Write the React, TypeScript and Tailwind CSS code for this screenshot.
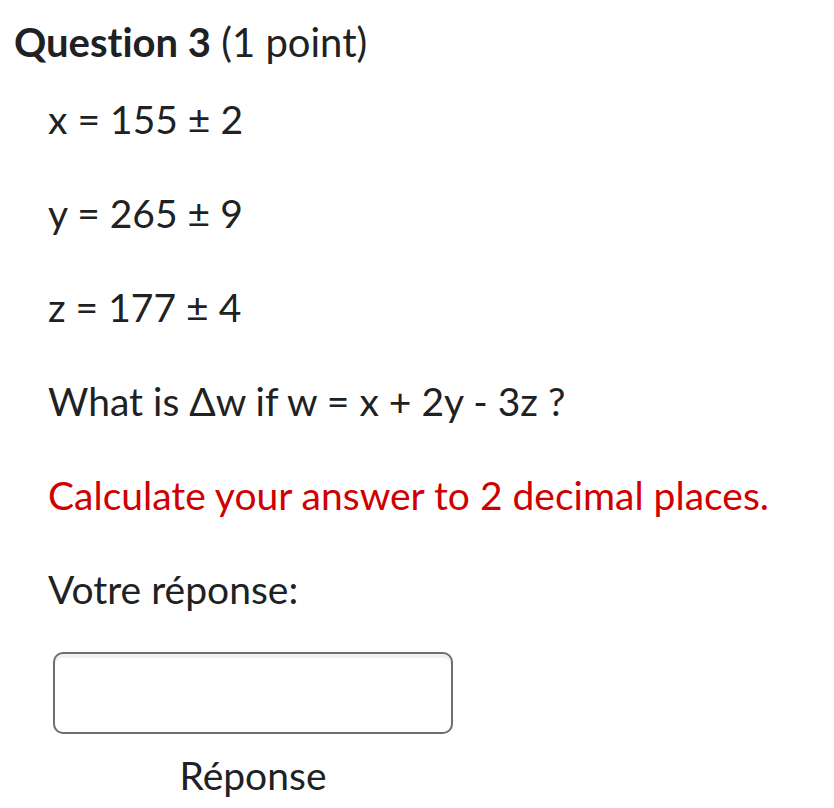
export default function App() {
  return (
    <div
      className="w-[834px] h-[808px] bg-white text-[#202122] overflow-hidden [font-variant-ligatures:none]"
      style={{ fontFamily: "Lato, 'Liberation Sans', sans-serif" }}
    >
      <h2 className="pl-[14px] pt-[12px] text-[40px] leading-[60px] font-normal">
        <span className="font-bold">Question 3</span> (1 point)
      </h2>

      <div className="pl-[48px] pt-[17px] text-[39px] leading-[60px] flex flex-col gap-[34px]">
        <p>x = 155 ± 2</p>
        <p>y = 265 ± 9</p>
        <p>z = 177 ± 4</p>
        <p>What is Δw if w = x + 2y - 3z ?</p>
        <p className="text-[#d00000]">Calculate your answer to 2 decimal places.</p>
        <p>Votre réponse:</p>
      </div>

      <div className="ml-[53px] mt-[33px] w-[400px] flex flex-col items-center">
        <input
          type="text"
          aria-label="Réponse"
          className="w-[400px] h-[82px] rounded-[10px] border-2 border-[#6b6e73] bg-white shadow-[inset_0_4px_0_#eef0f2] outline-none"
        />
        <span className="mt-[11px] text-[39px] leading-[60px]">Réponse</span>
      </div>
    </div>
  );
}
